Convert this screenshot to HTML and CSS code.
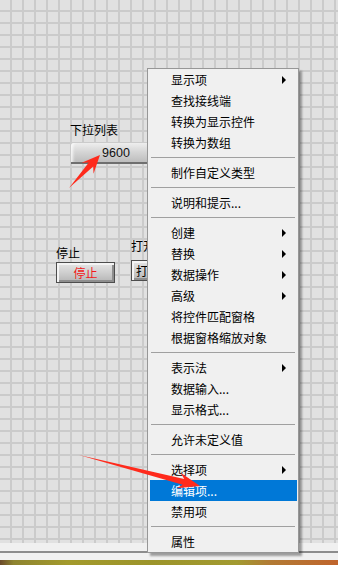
FILE: index.html
```html
<!DOCTYPE html>
<html lang="zh-CN">
<head>
  <meta charset="UTF-8">
  <title>前面板</title>
  <link rel="stylesheet" href="styles.css">
</head>
<body>

<div class="window">
  <!-- front panel grid with controls -->
  <div class="panel">
    <div class="ctl ring-ctl">
      <div class="label">下拉列表</div>
      <div class="ring">9600</div>
    </div>
    <div class="ctl stop-ctl">
      <div class="label">停止</div>
      <div class="btn btn-stop">停止</div>
    </div>
    <div class="ctl open-ctl">
      <div class="label">打开</div>
      <div class="btn btn-open">打开</div>
    </div>
  </div>

  <div class="statusbar">
    <div class="strip"></div>
    <div class="rule"></div>
    <div class="strip short"></div>
    <div class="desktop"></div>
  </div>

  <!-- right-click menu -->
  <div class="menu">
    <div class="item sub">显示项</div>
    <div class="item">查找接线端</div>
    <div class="item">转换为显示控件</div>
    <div class="item">转换为数组</div>
    <div class="sep"></div>
    <div class="item">制作自定义类型</div>
    <div class="sep"></div>
    <div class="item">说明和提示...</div>
    <div class="sep"></div>
    <div class="item sub">创建</div>
    <div class="item sub">替换</div>
    <div class="item sub">数据操作</div>
    <div class="item sub">高级</div>
    <div class="item">将控件匹配窗格</div>
    <div class="item">根据窗格缩放对象</div>
    <div class="sep"></div>
    <div class="item sub">表示法</div>
    <div class="item">数据输入...</div>
    <div class="item">显示格式...</div>
    <div class="sep"></div>
    <div class="item">允许未定义值</div>
    <div class="sep"></div>
    <div class="item sub">选择项</div>
    <div class="item active">编辑项...</div>
    <div class="item">禁用项</div>
    <div class="sep"></div>
    <div class="item">属性</div>
  </div>

  <!-- annotation arrows -->
  <svg class="marks" width="338" height="565" viewBox="0 0 338 565">
    <polygon points="69,188 93.2,166.6 93.5,173.7 100,155 81.7,162.7 88.8,162.5" />
    <polygon points="79,455 182.8,484.7 176.7,488.3 200,486 180.7,472.8 184.2,478.9" />
  </svg>
</div>

</body>
</html>
```

FILE: styles.css
```css
body {
  margin: 0;
  font-family: "Noto Sans CJK SC", "Liberation Sans", sans-serif;
  font-size: 12px;
  color: #000;
  overflow: hidden;
}

.window {
  position: relative;
  width: 338px;
  height: 565px;
  overflow: hidden;
}

.panel {
  position: relative;
  height: 543px;
  background-color: #e1e1e1;
  background-image:
    linear-gradient(to right, #cbcbcb 2px, transparent 2px),
    linear-gradient(to bottom, #cbcbcb 2px, transparent 2px);
  background-size: 12px 12px;
  background-position: 10px 10px;
}

.ctl {
  position: absolute;
}

.label {
  line-height: 16px;
  white-space: nowrap;
}

.ring-ctl { left: 70px; top: 122px; }
.stop-ctl { left: 56px; top: 245px; }
.open-ctl { left: 131px; top: 238px; }

.ring {
  margin-top: 5px;
  margin-left: 1px;
  width: 90px;
  height: 19px;
  line-height: 20px;
  text-align: center;
  font-family: "Liberation Sans", sans-serif;
  font-size: 12.5px;
  color: #111;
  background: linear-gradient(to bottom, #eeeeee, #d6d6d6 45%, #bdbdbd);
  border-bottom: 2px solid #6f6f6f;
  border-radius: 3px 0 0 0;
  box-shadow: inset 4px 0 3px -2px rgba(255, 255, 255, 0.8);
}

.btn {
  height: 19px;
  line-height: 19px;
  border: 1px solid #4d4d4d;
  background: linear-gradient(to bottom, #e6e6e6, #cfcfcf 50%, #b5b5b5);
  box-shadow: inset 2px 2px 0 #f4f4f4, inset -2px -2px 0 #8e8e8e;
  white-space: nowrap;
}

.btn-stop {
  margin-top: 1px;
  width: 57px;
  text-align: center;
  color: #f21a1a;
}

.btn-open {
  margin-top: 6px;
  width: 60px;
  padding-left: 4px;
}

.statusbar .strip {
  height: 8px;
  background: #f0f0f0;
}

.statusbar .rule {
  height: 2px;
  background: #8c8c8c;
}

.statusbar .strip.short {
  height: 7px;
}

.desktop {
  height: 5px;
  background: linear-gradient(to right, #6b4a2a 0, #8e8430 4%, #a39a2c 20%, #9c942a 45%, #a29a30 70%, #b27a34 80%, #c0642c 100%);
}

.menu {
  position: absolute;
  left: 147px;
  top: 68px;
  width: 150px;
  border: 1px solid #979797;
  background: #f0f0f0;
  box-shadow: 3px 3px 2px rgba(0, 0, 0, 0.35);
}

.item {
  position: relative;
  height: 21px;
  line-height: 21px;
  margin: 0 1px 0 2px;
  padding-left: 21px;
  white-space: nowrap;
}

.item.sub::after {
  content: "";
  position: absolute;
  right: 11px;
  top: 7px;
  border-left: 4px solid #000;
  border-top: 4px solid transparent;
  border-bottom: 4px solid transparent;
}

.item.active {
  background: #0078d7;
  color: #fff;
}

.sep {
  height: 1px;
  margin: 4px 3px;
  background: #a0a0a0;
}

.marks {
  position: absolute;
  left: 0;
  top: 0;
  pointer-events: none;
}

.marks polygon {
  fill: #ff2a1c;
}
```
